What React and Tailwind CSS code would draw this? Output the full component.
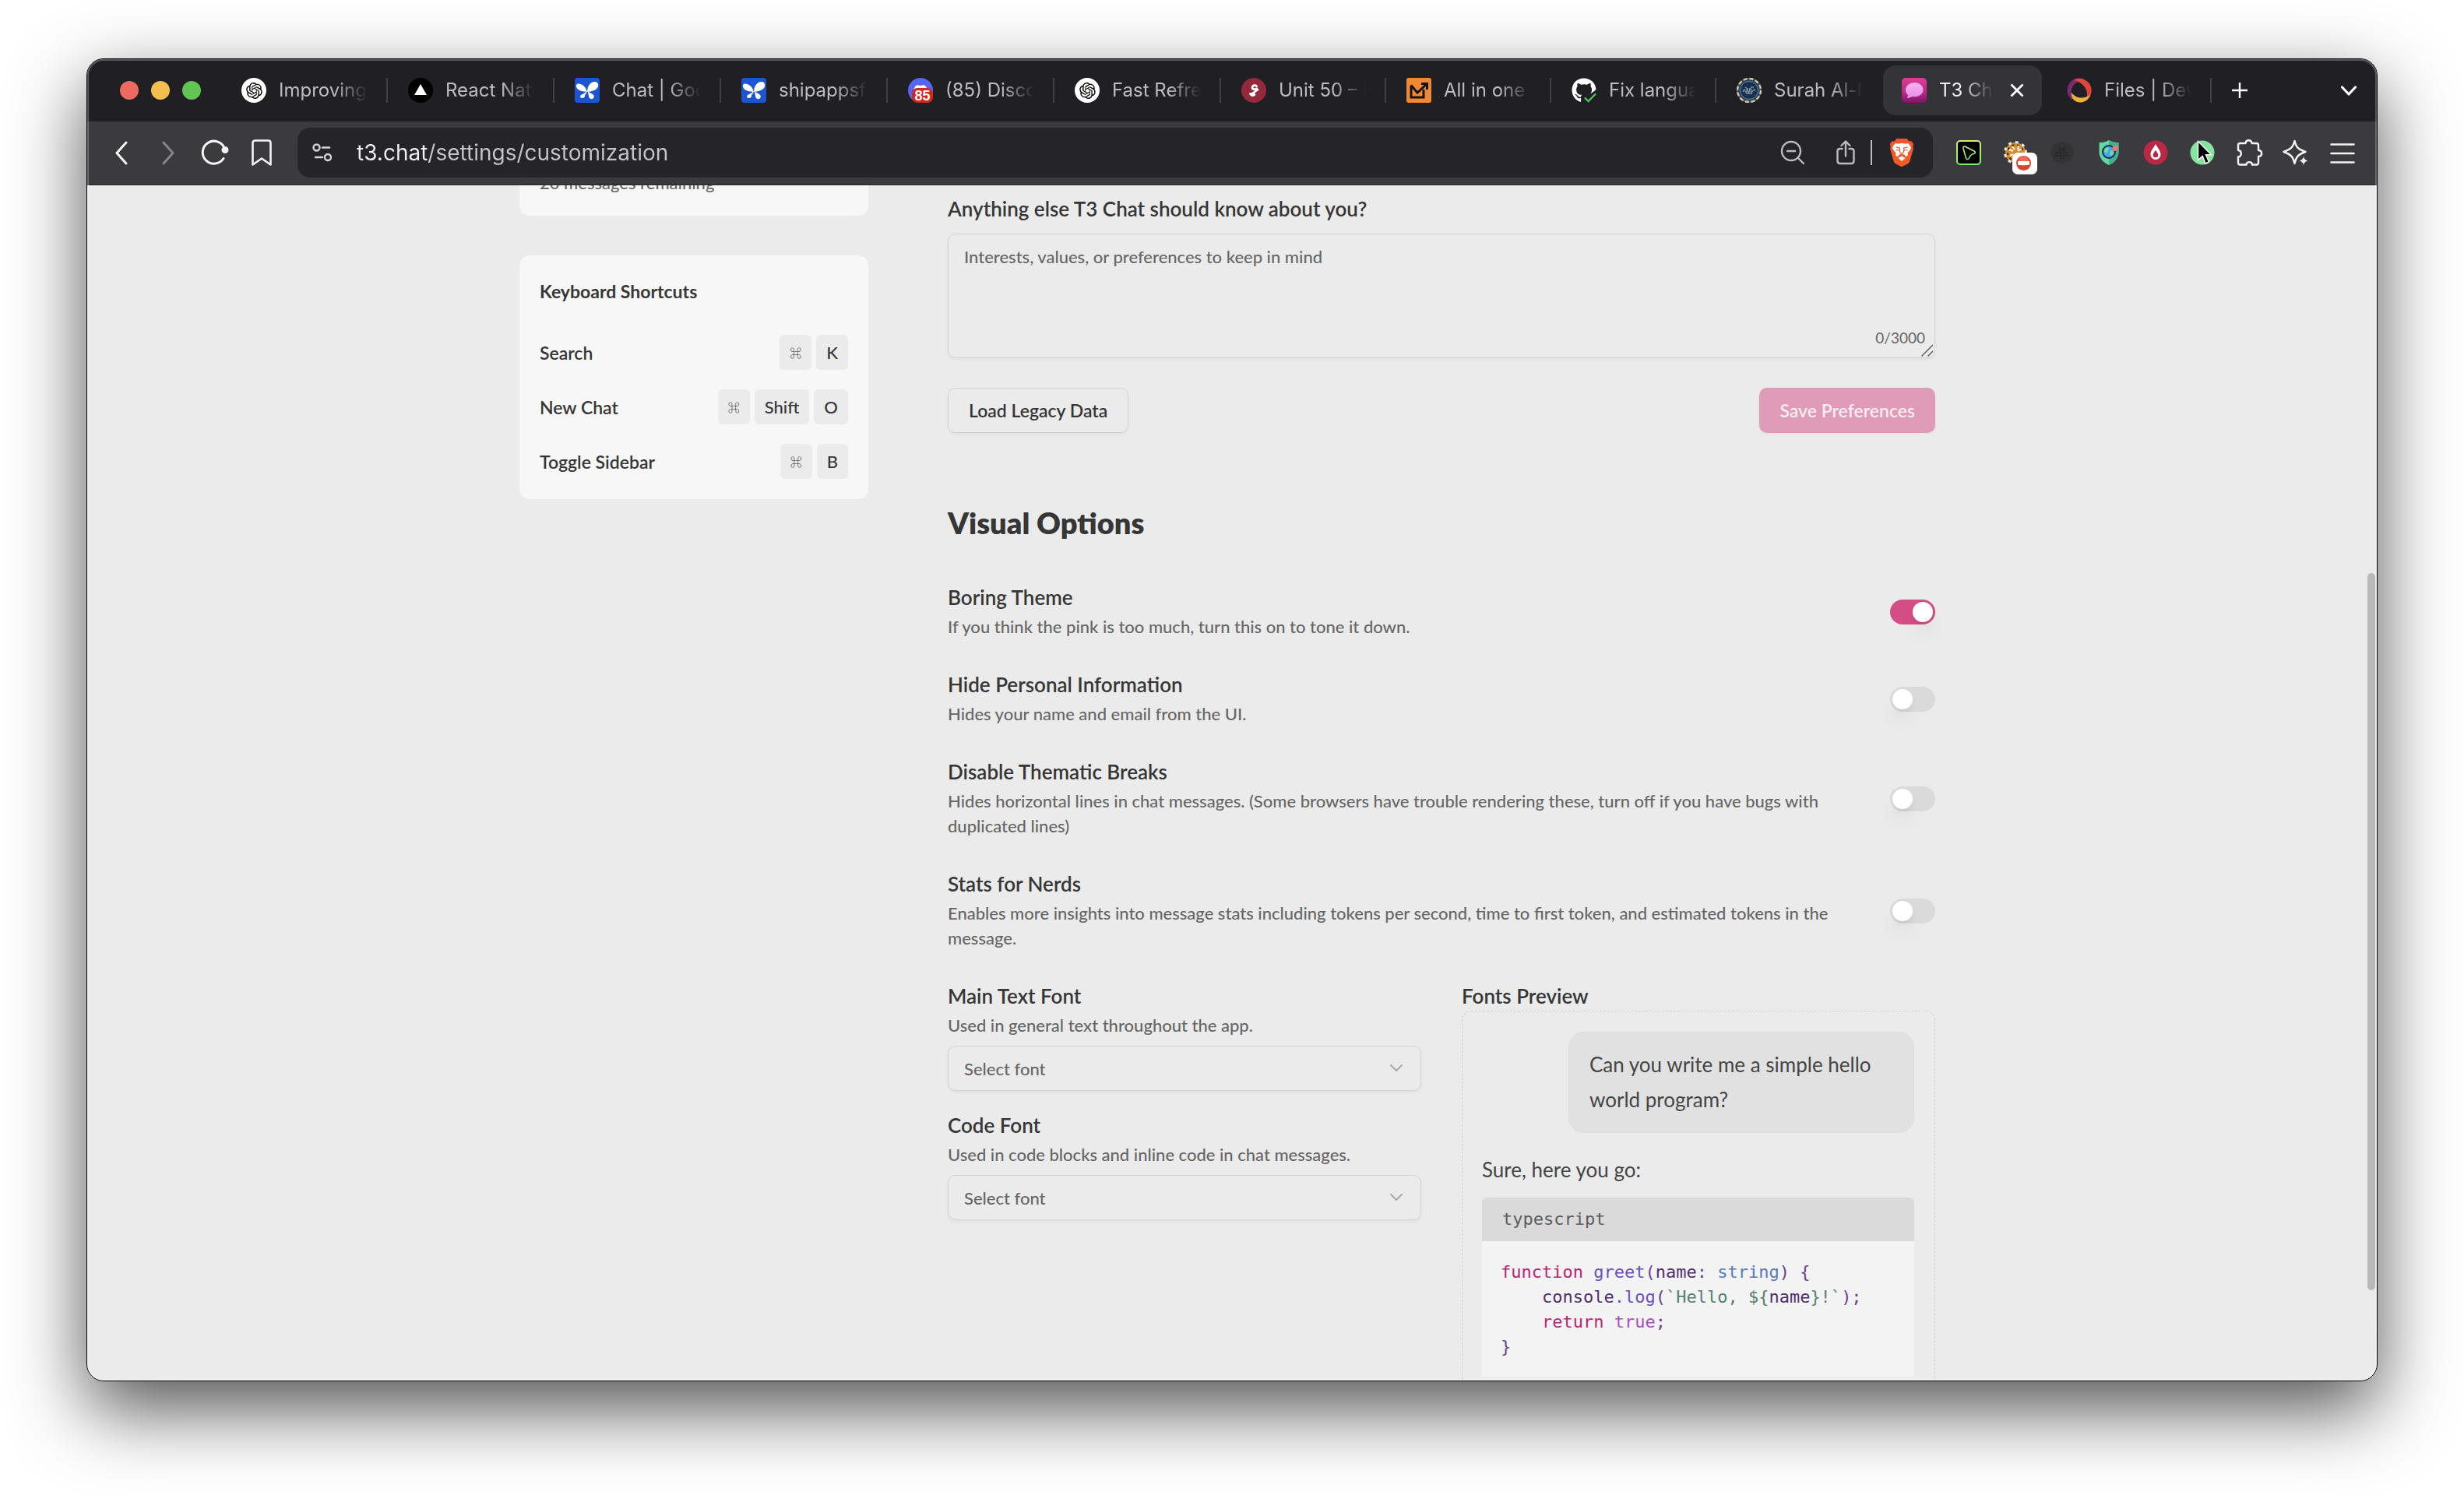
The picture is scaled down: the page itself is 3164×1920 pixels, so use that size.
import React from "react";
import { RiOpenaiFill } from "react-icons/ri";
import { FaDiscord, FaGithub } from "react-icons/fa";

/* ---------- favicons ---------- */

const OpenAI = () => (
  <span className="grid size-8 place-items-center rounded-full bg-white text-black">
    <RiOpenaiFill size={25} />
  </span>
);

const ReactNative = () => (
  <svg viewBox="0 0 32 32" className="size-8">
    <circle cx="16" cy="16" r="16" fill="#000" />
    <path d="M16 8l8 14H8z" fill="#fff" />
  </svg>
);

const Butterfly = () => (
  <svg viewBox="0 0 32 32" className="size-8">
    <rect width="32" height="32" rx="4" fill="#1f55cf" />
    <g fill="#fff">
      <path d="M15.800 18C12 17.600 6 17.500 3 13.500C0.500 9.500 2.500 7 5.500 7.500C10 8.200 14.500 11.500 15.800 18z" />
      <path d="M16.200 18C15.800 11 20 5.300 25.500 5C30.500 5 31.500 10 28.500 13.500C25.500 16.800 20.500 17.500 16.200 18z" />
      <path d="M15.500 17C15.500 19.500 14.500 20.500 13 22C13.500 24.500 12 25.800 9.500 26C6.500 26 6.500 22.800 8.800 21.500C11.500 20.500 13.500 19.500 15.500 17z" />
      <path d="M16.500 17C18.500 19.500 24.500 20 24.800 23.800C24.800 27 21.500 28 19.500 26.500C17.500 24.500 18 20.500 16.500 17z" />
    </g>
  </svg>
);

const Discord = () => (
  <span className="relative grid size-8 place-items-center rounded-full bg-[#5865f2] text-white">
    <FaDiscord size={20} />
    <span className="absolute right-0 bottom-0 flex h-[19px] w-[27px] items-center justify-center rounded-[7px] bg-[#d3271c] font-['Liberation_Sans',sans-serif] text-[18px] leading-none font-bold text-white">
      85
    </span>
  </span>
);

const Unit = () => (
  <svg viewBox="0 0 32 32" className="size-8">
    <circle cx="16" cy="16" r="16" fill="#93293a" />
    <path d="M19.500 10.500C17 8.800 14 10 14 12.500C14 14.800 16.500 15.300 20 13.800" fill="none" stroke="#fff" strokeWidth="2.800" strokeLinecap="round" />
    <path d="M21 15.500C17 16.500 15.500 21.500 11.500 20.500M11.500 20.500C12.500 23 15.500 23 17 21.500" fill="none" stroke="#fff" strokeWidth="2.800" strokeLinecap="round" />
  </svg>
);

const AllInOne = () => (
  <svg viewBox="0 0 32 32" className="size-8">
    <rect width="32" height="32" rx="3" fill="#ee8a35" />
    <path d="M6 9.500V25H22V15M6 9.500L14 19L26 8M19 7.500H26.500V15" fill="none" stroke="#171310" strokeWidth="3" />
  </svg>
);

const GithubDone = () => (
  <span className="relative block size-8 text-white">
    <FaGithub size={32} />
    <svg viewBox="0 0 32 32" className="absolute inset-0 size-8">
      <path d="M12.500 33V25.500L18 18L25 20L33 14V33z" fill="#201f24" />
      <path d="M17 25.500L21.500 30L31 20.500" fill="none" stroke="#4fc35a" strokeWidth="2.400" />
    </svg>
  </span>
);

const Surah = () => (
  <svg viewBox="0 0 32 32" className="size-8">
    <circle cx="16" cy="16" r="15" fill="#27435f" stroke="#4c5d6a" strokeWidth="2" />
    <circle cx="16" cy="16" r="15" fill="none" stroke="#dcc9a4" strokeWidth="2.400" strokeDasharray="5 2.850" />
    <circle cx="16" cy="16" r="11.500" fill="#173250" stroke="#6d8496" strokeWidth="1" />
    <path d="M8 18c1-3 2-5 3-1s2 1 2-2 2 0 2 3 2-1 2-4 2 1 2 4 2-2 3-3 1 2 2 2M11 12l3 2M18 12h4M12 20h8" fill="none" stroke="#b9c4c9" strokeWidth="1" />
  </svg>
);

const T3 = () => (
  <svg viewBox="0 0 32 32" className="size-8">
    <defs>
      <linearGradient id="t3bg" x1="0" y1="0" x2="0" y2="1">
        <stop offset="0" stopColor="#dd3d96" />
        <stop offset=".6" stopColor="#b62a82" />
        <stop offset="1" stopColor="#7c1566" />
      </linearGradient>
      <linearGradient id="t3fg" x1="0" y1="0" x2="0" y2="1">
        <stop offset="0" stopColor="#f7b3f3" />
        <stop offset="1" stopColor="#e88be6" />
      </linearGradient>
    </defs>
    <rect width="32" height="32" rx="5" fill="url(#t3bg)" />
    <path d="M16.500 6C10 6 5 10 5 15.500C5 18 6 20.300 8 22L7 26C10 25.800 12 24.800 13.500 24C22 25.500 27.500 21 27.500 15.300C27.500 10 22.500 6 16.500 6z" fill="url(#t3fg)" />
  </svg>
);

const Files = () => (
  <svg viewBox="0 0 32 32" className="size-8">
    <path d="M14 0.500A15.500 15.500 0 0 0 4.500 26C6 28.500 8 29 7.500 26.500C3.500 17 6.500 7.500 16 4.500z" fill="#7b2a72" />
    <path d="M9 2.500A15.500 15.500 0 0 1 31.500 18C31 23 28.500 26.500 25.500 26.500C28 16 22.500 7 9 2.500z" fill="#e0443a" />
    <path d="M6 19C5 28 12.500 32 18 31.500C24 31 28.500 27.500 30 21.500C24 27 12 27.500 6 19z" fill="#efb13c" />
  </svg>
);

const tabs = [
  { icon: OpenAI, title: "Improving" },
  { icon: ReactNative, title: "React Native" },
  { icon: Butterfly, title: "Chat | Google" },
  { icon: Butterfly, title: "shipappsfast" },
  { icon: Discord, title: "(85) Discord" },
  { icon: OpenAI, title: "Fast Refresh" },
  { icon: Unit, title: "Unit 50 – Lesson" },
  { icon: AllInOne, title: "All in one SEO" },
  { icon: GithubDone, title: "Fix language" },
  { icon: Surah, title: "Surah Al-Mulk" },
  { icon: T3, title: "T3 Chat", active: true },
  { icon: Files, title: "Files | Devin" },
];

function Tab({ icon: Icon, title, active, narrow, divider }) {
  return (
    <div className={narrow ? "flex h-16 w-[212px] min-w-0 shrink items-center" : "flex h-16 w-[214px] min-w-0 shrink items-center"}>
      <div
        className={
          active
            ? "mr-[6px] ml-[2px] flex h-16 min-w-0 flex-1 items-center rounded-[16px] bg-[#343338] pr-[18px] pl-6 text-[#ececee]"
            : "flex h-16 min-w-0 flex-1 items-center pr-6 pl-[26px] text-[#bdbdc0]"
        }
      >
        <button type="button" className="flex min-w-0 flex-1 items-center gap-4">
          <span className="shrink-0">
            <Icon />
          </span>
          <span className="min-w-0 flex-1 overflow-hidden text-left text-[24px] leading-8 whitespace-nowrap [mask-image:linear-gradient(to_right,#000_calc(100%-42px),transparent)]">
            {title}
          </span>
        </button>
        {active && (
          <button type="button" aria-label="Close tab" className="ml-4 shrink-0">
            <svg viewBox="0 0 28 28" className="size-7" fill="none" stroke="#fff" strokeWidth="2.800">
              <path d="M6.500 6.500l15 15M21.500 6.500l-15 15" />
            </svg>
          </button>
        )}
      </div>
      {divider && <span className="h-8 w-[2px] shrink-0 bg-[#414045]" />}
    </div>
  );
}

function TabStrip() {
  return (
    <div className="flex h-20 shrink-0 items-center bg-[#201f24] pr-[18px] pl-[42px]">
      <div className="flex shrink-0 gap-4">
        <button type="button" aria-label="Close window" className="size-6 rounded-full bg-[#ec6a5e]" />
        <button type="button" aria-label="Minimise window" className="size-6 rounded-full bg-[#f4bf4f]" />
        <button type="button" aria-label="Zoom window" className="size-6 rounded-full bg-[#61c554]" />
      </div>
      <div className="ml-[26px] flex min-w-0">
        {tabs.map((t, i) => (
          <Tab key={i} {...t} narrow={i > 5} divider={i !== 9 && i !== 10} />
        ))}
      </div>
      <button type="button" aria-label="New tab" className="ml-[22px] shrink-0">
        <svg viewBox="0 0 28 28" className="size-7" fill="none" stroke="#fff" strokeWidth="2.400">
          <path d="M14 4v20M4 14h20" />
        </svg>
      </button>
      <button type="button" aria-label="Search tabs" className="ml-auto shrink-0">
        <svg viewBox="0 0 36 28" className="h-7 w-9" fill="none" stroke="#fff" strokeWidth="3.200" strokeLinecap="round" strokeLinejoin="round">
          <path d="M9.500 10l8.500 9 8.500-9" />
        </svg>
      </button>
    </div>
  );
}

/* ---------- toolbar ---------- */

function Slot({ label, children }) {
  return (
    <button type="button" aria-label={label} className="grid h-16 w-[60px] shrink-0 place-items-center">
      {children}
    </button>
  );
}

const Brave = () => (
  <svg viewBox="0 0 32 36" className="h-9 w-8">
    <defs>
      <linearGradient id="brv" x1="0" y1="0" x2="0" y2="1">
        <stop offset="0" stopColor="#f0562b" />
        <stop offset="1" stopColor="#f15c22" />
      </linearGradient>
    </defs>
    <path d="M9.500 0H22.500L25.500 3.500L28.500 3.200L31.200 7L30.300 10.500L31 13L26.500 28.500C26 30.500 25 31.500 23.500 32.500L16 36.300L8.500 32.500C7 31.500 6 30.500 5.500 28.500L1 13L1.700 10.500L.8 7L3.500 3.200L6.500 3.500z" fill="url(#brv)" />
    <path d="M16 6L20 6.500L24.500 6.200L28 11L27.200 14L23.500 18.500L24 21.500L21 23.500L20 21L16 19.500L12 21L11 23.500L8 21.500L8.500 18.500L4.800 14L4 11L7.500 6.200L12 6.500z" fill="#fff" />
    <path d="M16 22.500L20.500 25L16 29L11.500 25z" fill="#fff" />
    <path d="M8.500 10.800L13.500 12.200L13 14.500L14 18L16 19.500L18 18L19 14.500L18.500 12.200L23.500 10.800M8.500 14.500L12.500 15M23.500 14.500L19.500 15M16 19.500V22" fill="none" stroke="#f0562b" strokeWidth="1.200" />
  </svg>
);

const NeonCursor = () => (
  <svg viewBox="0 0 32 32" className="size-8">
    <defs>
      <linearGradient id="neon" x1="0" y1="0" x2="0" y2="1">
        <stop offset="0" stopColor="#d5ef6a" />
        <stop offset="1" stopColor="#7df06a" />
      </linearGradient>
    </defs>
    <rect x="1" y="1" width="30" height="30" rx="4" fill="#000" stroke="url(#neon)" strokeWidth="2" />
    <path d="M9 10.500C8.500 8.500 10 7.500 11.500 8.200L23 14C25 15 24.700 17.200 22.500 17.500C19.500 18 18.500 19 16.500 23C15.500 25 13.300 25 12.500 23z" fill="none" stroke="url(#neon)" strokeWidth="1.600" />
  </svg>
);

const Tiger = () => (
  <span className="relative block size-8">
    <svg viewBox="0 0 32 32" className="size-8">
      <circle cx="16" cy="16" r="13" fill="#d98a2b" />
      <circle cx="16" cy="16" r="13.500" fill="none" stroke="#e9e6df" strokeWidth="3" strokeDasharray="4 5" />
      <circle cx="16" cy="16" r="10" fill="none" stroke="#2d2620" strokeWidth="2" strokeDasharray="3 4" />
      <path d="M8 12l5 2M12 8l3 4M20 7l-1 5M24 11l-5 3M9 20l4-2" stroke="#fff" strokeWidth="2" />
    </svg>
    <svg viewBox="0 0 32 28" className="absolute top-4 left-3 h-7 w-8">
      <rect width="32" height="28" rx="7" fill="#fff" />
      <circle cx="14.500" cy="13.500" r="9.500" fill="#d9442c" />
      <circle cx="14.500" cy="11" r="6.500" fill="#ec8a74" opacity=".6" />
      <rect x="7" y="11" width="15" height="5" rx="1" fill="#fff" />
    </svg>
  </span>
);

const Hexagon = () => (
  <svg viewBox="0 0 32 32" className="size-8">
    <path d="M16 1L27 5.500L31 16L27 26.500L16 31L5 26.500L1 16L5 5.500z" fill="#333336" />
    <path d="M13 8v5h6V8M13 11h6M8 16h7v8M8 20h6M24 16h-6v8M18 20h6M8 16v5" fill="none" stroke="#29292b" strokeWidth="1.800" />
  </svg>
);

const Shield = () => (
  <svg viewBox="0 0 32 34" className="h-[34px] w-8">
    <path d="M16 1C12 3.500 8 4 3.500 4V16C3.500 24 9 30 16 33C23 30 28.500 24 28.500 16V4C24 4 20 3.500 16 1z" fill="#62d6a6" />
    <path d="M16 1V33C23 30 28.500 24 28.500 16V4C24 4 20 3.500 16 1z" fill="#45b08d" />
    <circle cx="16" cy="16" r="8" fill="#45a4f2" stroke="#17304f" strokeWidth="2" />
    <path d="M11 11.500c3-2 5-1 5 1s-2 2-2 4-3 1-4-1zM18 15c2-1 4 0 4 2s-3 4-4 4-1-4 0-6z" fill="#6fe08c" />
    <circle cx="24" cy="11.500" r="3.600" fill="#f2726f" />
  </svg>
);

const Drop = () => (
  <svg viewBox="0 0 32 32" className="size-8">
    <circle cx="16" cy="16" r="15.500" fill="#b92946" />
    <path d="M16 5C18.500 10 22.500 13.500 22.500 18.500A6.500 6.500 0 0 1 9.500 18.500C9.500 13.500 13.500 10 16 5z" fill="#fff" />
    <path d="M16 12.500C17 15 19.300 16.500 19.300 19A3.300 3.300 0 0 1 12.700 19C12.700 16.500 15 15 16 12.500z" fill="#b92946" />
  </svg>
);

const Pointer = () => (
  <svg viewBox="0 0 32 32" className="size-8">
    <circle cx="16" cy="16" r="15.500" fill="#87e3a0" />
    <path d="M10.500 1.500V25.500L16.200 20.500L20 30L24.500 28L20.500 18.800H27.500z" fill="#000" stroke="#fff" strokeWidth="1.400" />
  </svg>
);

const PuzzlePiece = () => (
  <svg viewBox="0 0 36 36" className="size-9" fill="none" stroke="#f4f4f5" strokeWidth="2.400" strokeLinejoin="round">
    <path d="M4 8.500C4 7 5 6 6.500 6H13.500C14 1 21 1 21.500 6H27.500C29 6 30 7 30 8.500V15C35.500 15.500 35.500 22.500 30 23V31C30 32.500 29 33.500 27.500 33.500H22C22 29 14.500 29 14.500 33.500H6.500C5 33.500 4 32.500 4 31V23.500C9 23 9 15.500 4 15z" />
  </svg>
);

const Sparkle = () => (
  <svg viewBox="0 0 36 36" className="size-9">
    <path d="M16.500 3C18.500 11 20.500 13.500 30.500 17C20.500 20.500 18.500 23.500 16.500 32C14.500 23.500 12 20.500 2.500 17C12 13.500 14.500 11 16.500 3z" fill="none" stroke="#f4f4f5" strokeWidth="2.400" strokeLinejoin="round" />
    <path d="M28 22C28.800 26 30 27.200 34 28.500C30 29.800 28.800 31 28 35C27.200 31 26 29.800 22 28.500C26 27.200 27.200 26 28 22z" fill="#f4f4f5" stroke="#3b3a3f" strokeWidth=".6" />
  </svg>
);

function Toolbar() {
  return (
    <div className="flex h-[82px] shrink-0 items-center border-b-2 border-[#302f34] bg-[#3b3a3f] px-[14px]">
      <Slot label="Back">
        <svg viewBox="0 0 32 32" className="size-8" fill="none" stroke="#f4f4f5" strokeWidth="3" strokeLinecap="round" strokeLinejoin="round">
          <path d="M22 3L10 16.500L22 30" />
        </svg>
      </Slot>
      <Slot label="Forward">
        <svg viewBox="0 0 32 32" className="size-8" fill="none" stroke="#858489" strokeWidth="3" strokeLinecap="round" strokeLinejoin="round">
          <path d="M10 3L22 16.500L10 30" />
        </svg>
      </Slot>
      <Slot label="Reload">
        <svg viewBox="0 0 36 36" className="size-9" fill="none" stroke="#f4f4f5" strokeWidth="3" strokeLinecap="round">
          <path d="M29 25.500A14.500 14.500 0 1 1 30.500 13" />
          <circle cx="31" cy="14.500" r="3" fill="#f4f4f5" />
        </svg>
      </Slot>
      <Slot label="Bookmark">
        <svg viewBox="0 0 32 36" className="h-9 w-8" fill="none" stroke="#f4f4f5" strokeWidth="2.600" strokeLinejoin="round">
          <path d="M4.500 33.500V5.500C4.500 3.500 6 2.500 7.500 2.500H24.500C26 2.500 27.500 3.500 27.500 5.500V33.500L16 25.500z" />
        </svg>
      </Slot>
      <div className="mr-4 ml-4 flex h-16 min-w-0 flex-1 items-center rounded-[16px] bg-[#252429] pr-6 pl-[18px]">
        <button type="button" aria-label="Site information" className="shrink-0">
          <svg viewBox="0 0 28 28" className="size-7" fill="none" stroke="#d4d4d8" strokeWidth="2.400" strokeLinecap="round">
            <circle cx="6.500" cy="7.500" r="4" />
            <path d="M14 7.500h9" />
            <circle cx="21" cy="20" r="4" />
            <path d="M5 20h9" />
          </svg>
        </button>
        <input
          type="text"
          aria-label="Address"
          defaultValue="t3.chat/settings/customization"
          className="ml-[30px] min-w-0 flex-1 bg-[linear-gradient(90deg,#f1f1f3_93px,#c5c5ca_93px)] bg-clip-text text-[28px] leading-10 text-transparent outline-none"
        />
        <button type="button" aria-label="Zoom" className="shrink-0">
          <svg viewBox="0 0 32 32" className="size-8" fill="none" stroke="#bcbcc0" strokeWidth="2.400" strokeLinecap="round">
            <circle cx="14" cy="14" r="12" />
            <path d="M22.500 22.500L30 30M9 14h10" />
          </svg>
        </button>
        <button type="button" aria-label="Share" className="ml-9 shrink-0">
          <svg viewBox="0 0 32 32" className="size-8" fill="none" stroke="#bcbcc0" strokeWidth="2.400" strokeLinecap="round" strokeLinejoin="round">
            <path d="M11.500 11H9C7 11 5.500 12 5.500 14V26.500C5.500 28.500 7 30 9 30H23C25 30 26.500 28.500 26.500 26.500V14C26.500 12 25 11 23 11H20.500M16 20.500V2.500M10.500 7L16 1.500L21.500 7" />
          </svg>
        </button>
        <span className="mr-[22px] ml-4 h-8 w-[2px] shrink-0 bg-[#bcbcc0]" />
        <button type="button" aria-label="Brave Shields" className="shrink-0">
          <Brave />
        </button>
      </div>
      <Slot label="Neon Cursor"><NeonCursor /></Slot>
      <Slot label="Blocker"><Tiger /></Slot>
      <Slot label="Extension"><Hexagon /></Slot>
      <Slot label="Privacy"><Shield /></Slot>
      <Slot label="Drop"><Drop /></Slot>
      <Slot label="Pointer"><Pointer /></Slot>
      <Slot label="Extensions"><PuzzlePiece /></Slot>
      <Slot label="Assistant"><Sparkle /></Slot>
      <Slot label="Menu">
        <svg viewBox="0 0 32 32" className="size-8" stroke="#f4f4f5" strokeWidth="2.600" strokeLinecap="round">
          <path d="M1.500 5.500h29M1.500 17h29M1.500 28.500h29" />
        </svg>
      </Slot>
    </div>
  );
}

/* ---------- settings page ---------- */

const shortcuts = [
  { name: "Search", keys: ["⌘", "K"] },
  { name: "New Chat", keys: ["⌘", "Shift", "O"] },
  { name: "Toggle Sidebar", keys: ["⌘", "B"] },
];

function Sidebar() {
  return (
    <aside className="w-[448px] shrink-0">
      <div className="rounded-[13px] bg-[#f7f7f7] px-[26px] pt-[13px] pb-[26px]">
        <p className="text-[22px] leading-8 font-medium text-[#666]">20 messages remaining</p>
      </div>
      <div className="mt-[51px] rounded-[13px] bg-[#f7f7f7] px-[26px] pt-[26px] pb-[26px]">
        <h3 className="text-[23px] leading-10 font-bold">Keyboard Shortcuts</h3>
        <div className="mt-9 flex flex-col gap-[25px]">
          {shortcuts.map((s) => (
            <div key={s.name} className="flex items-center justify-between">
              <span className="text-[23px] leading-8 font-semibold">{s.name}</span>
              <span className="flex gap-[6px]">
                {s.keys.map((k) => (
                  <kbd
                    key={k}
                    className={
                      k === "⌘"
                        ? "flex h-[45px] items-center rounded-[6px] bg-[#ebebeb] px-[13px] font-['Noto_Sans_CJK_JP',sans-serif] text-[15px] leading-8 font-light"
                        : "flex h-[45px] items-center rounded-[6px] bg-[#ebebeb] px-[13px] font-['Lato','Open_Sans',sans-serif] text-[22px] leading-8 font-medium"
                    }
                  >
                    {k}
                  </kbd>
                ))}
              </span>
            </div>
          ))}
        </div>
      </div>
    </aside>
  );
}

const options = [
  { id: "boring", title: "Boring Theme", text: "If you think the pink is too much, turn this on to tone it down.", on: true },
  { id: "hide", title: "Hide Personal Information", text: "Hides your name and email from the UI." },
  {
    id: "breaks",
    title: "Disable Thematic Breaks",
    text: "Hides horizontal lines in chat messages. (Some browsers have trouble rendering these, turn off if you have bugs with duplicated lines)",
  },
  {
    id: "stats",
    title: "Stats for Nerds",
    text: "Enables more insights into message stats including tokens per second, time to first token, and estimated tokens in the message.",
  },
];

function Option({ id, title, text, on }) {
  return (
    <div className="flex items-center justify-between gap-12">
      <div className="flex flex-col gap-[6px]">
        <label htmlFor={id} className="text-[26px] leading-8 font-semibold">
          {title}
        </label>
        <p className="text-[22px] leading-8 font-medium text-[#666]">{text}</p>
      </div>
      <input
        id={id}
        type="checkbox"
        role="switch"
        defaultChecked={on}
        className="flex h-8 w-[58px] shrink-0 appearance-none items-center rounded-full bg-[#dadada] px-[3px] before:size-[26px] before:rounded-full before:bg-white before:shadow-[0_16px_24px_-4px_rgba(0,0,0,0.1),0_6px_10px_-6px_rgba(0,0,0,0.15)] checked:justify-end checked:bg-[#d54d85]"
      />
    </div>
  );
}

function FontField({ id, title, text }) {
  return (
    <div>
      <label htmlFor={id} className="block text-[26px] leading-8 font-semibold">
        {title}
      </label>
      <p className="mt-[6px] text-[22px] leading-8 font-medium text-[#666]">{text}</p>
      <div className="mt-[10px] grid items-center">
        <select
          id={id}
          className="col-start-1 row-start-1 h-[58px] w-full appearance-none rounded-[10px] border border-[#d3d3d3] bg-transparent px-5 text-[22px] font-medium text-[#666] shadow-[0_2px_4px_rgba(0,0,0,0.05)]"
        >
          <option>Select font</option>
        </select>
        <svg viewBox="0 0 24 24" className="pointer-events-none col-start-1 row-start-1 mr-5 size-6 justify-self-end" fill="none" stroke="#a8a8a8" strokeWidth="2" strokeLinecap="round" strokeLinejoin="round">
          <path d="M5 8l7 7 7-7" />
        </svg>
      </div>
    </div>
  );
}

const Kw = ({ children }) => <span className="text-[#b82672]">{children}</span>;
const Fn = ({ children }) => <span className="text-[#6a4fbf]">{children}</span>;
const Vr = ({ children }) => <span className="text-[#4f2f6f]">{children}</span>;
const Pn = ({ children }) => <span className="text-[#6b3f93]">{children}</span>;
const Ty = ({ children }) => <span className="text-[#5a7abf]">{children}</span>;
const St = ({ children }) => <span className="text-[#56806f]">{children}</span>;
const Bo = ({ children }) => <span className="text-[#ab4fc0]">{children}</span>;

function Preview() {
  return (
    <div>
      <h4 className="text-[26px] leading-8 font-semibold">Fonts Preview</h4>
      <div className="mt-[3px] rounded-[12px] border border-dashed border-[#d0d0d0] py-[26px] pr-[26px] pl-[25px] text-[26px] leading-[45px] text-[#454545]">
        <p className="ml-auto w-4/5 rounded-[20px] border border-[#dddddd] bg-[#e1e1e1] px-[26px] py-[19px]">
          Can you write me a simple hello world program?
        </p>
        <p className="mt-[25px]">Sure, here you go:</p>
        <div className="mt-[13px] overflow-hidden rounded-[6px] font-['DejaVu_Sans_Mono','Liberation_Mono',monospace] text-[22px] leading-8">
          <div className="bg-[#dadada] px-[26px] py-3 text-[#5c5c5c]">typescript</div>
          <pre className="bg-[#f3f3f3] px-6 pt-6 pb-[22px] font-[inherit]">
            <Kw>function</Kw> <Fn>greet</Fn><Pn>(</Pn><Vr>name</Vr><Pn>:</Pn> <Ty>string</Ty><Pn>) {"{"}</Pn>{"\n"}
            {"    "}<Vr>console</Vr><Fn>.log</Fn><Pn>(</Pn><St>{"`Hello, ${"}</St><Vr>name</Vr><St>{"}!`"}</St><Pn>);</Pn>{"\n"}
            {"    "}<Kw>return</Kw> <Bo>true</Bo><Pn>;</Pn>{"\n"}
            <Pn>{"}"}</Pn>
          </pre>
          <div className="h-10 bg-[#ebebeb]" />
        </div>
      </div>
    </div>
  );
}

function Main() {
  return (
    <main className="min-w-0 flex-1 pt-[46px]">
      <label htmlFor="about" className="block text-[26px] leading-8 font-semibold">
        Anything else T3 Chat should know about you?
      </label>
      <div className="relative mt-4">
        <textarea
          id="about"
          placeholder="Interests, values, or preferences to keep in mind"
          className="block h-40 w-full resize-none rounded-[10px] border border-[#d3d3d3] bg-transparent px-5 py-[13px] text-[22px] leading-8 font-medium shadow-[0_2px_4px_rgba(0,0,0,0.05)] outline-none placeholder:text-[#666]"
        />
        <span className="absolute right-[13px] bottom-3 text-[19px] leading-7 text-[#666]">0/3000</span>
        <svg viewBox="0 0 16 16" className="absolute right-[2px] bottom-[2px] size-4" stroke="#555" strokeWidth="1.400">
          <path d="M.5 15.500L15 1M8.500 15.500L15 9" />
        </svg>
      </div>
      <div className="mt-[38px] flex items-center justify-between">
        <button type="button" className="h-[58px] rounded-[10px] border border-[#d3d3d3] px-[26px] text-[23px] leading-8 font-semibold shadow-[0_2px_4px_rgba(0,0,0,0.05)]">
          Load Legacy Data
        </button>
        <button type="button" disabled className="h-[58px] rounded-[10px] bg-[#df9bb7] px-[26px] text-[23px] leading-8 font-semibold text-[#f8eef2] shadow-[0_2px_4px_rgba(0,0,0,0.04)]">
          Save Preferences
        </button>
      </div>

      <h2 className="mt-[92px] text-[38px] leading-[46px] font-extrabold">Visual Options</h2>
      <div className="mt-[57px] flex flex-col gap-[42px]">
        {options.map((o) => (
          <Option key={o.id} {...o} />
        ))}
        <div className="grid grid-cols-2 items-start gap-[52px]">
          <div className="flex flex-col gap-7">
            <FontField id="main-font" title="Main Text Font" text="Used in general text throughout the app." />
            <FontField id="code-font" title="Code Font" text="Used in code blocks and inline code in chat messages." />
          </div>
          <Preview />
        </div>
      </div>
    </main>
  );
}

export default function App() {
  return (
    <div className="flex h-screen flex-col overflow-hidden bg-white px-[111px] pt-[75px] pb-[146px]">
      <div className="flex min-h-0 flex-1 flex-col rounded-[22px] shadow-[0_36px_96px_rgba(0,0,0,0.68)]">
        <div className="relative flex min-h-0 flex-1 flex-col overflow-hidden rounded-[22px] border border-black bg-[#ebebeb] font-['Inter',sans-serif]">
          <TabStrip />
          <Toolbar />
          <div className="relative min-h-0 flex-1 overflow-hidden pr-3 font-['Lato','Open_Sans',sans-serif] text-[#363636]">
            <div className="mx-auto -mt-8 flex max-w-[1920px] gap-[102px] px-[51px]">
              <Sidebar />
              <Main />
            </div>
            <div className="absolute right-[2px] bottom-[116px] h-3/5 w-[10px] rounded-full bg-[#b9b9b9]" />
          </div>
          <div className="pointer-events-none absolute inset-0 rounded-[21px] border-2 border-white/25" />
        </div>
      </div>
    </div>
  );
}
